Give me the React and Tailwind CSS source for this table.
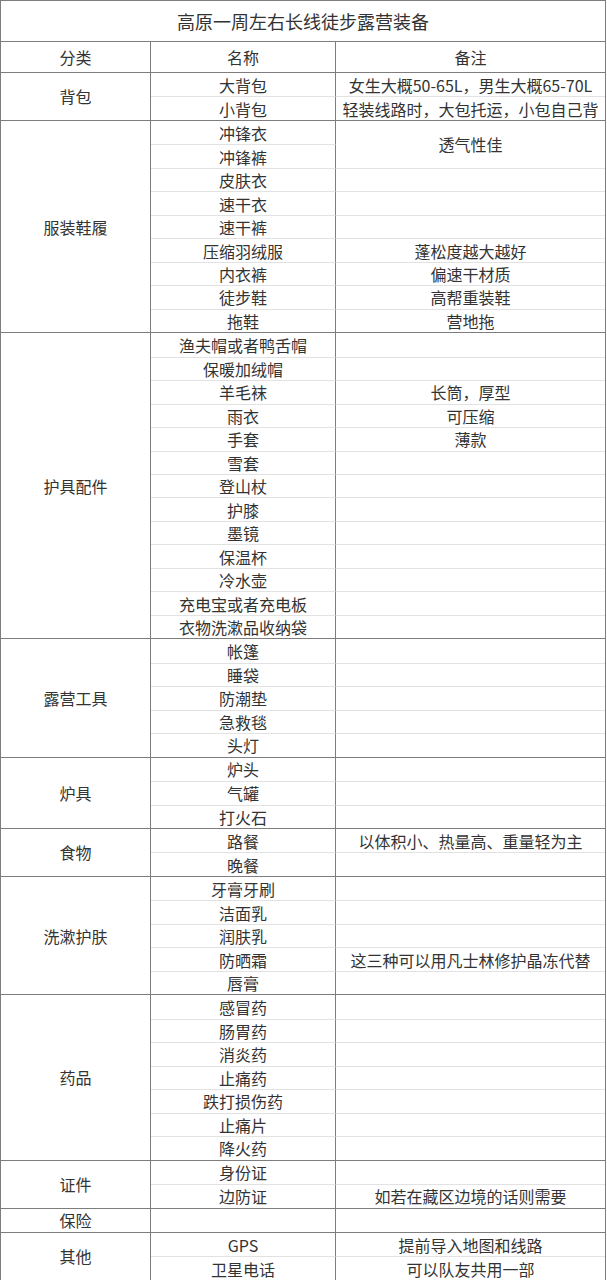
import React from "react";

// 高原徒步装备清单
const groups = [
  {
    name: "背包",
    items: [
      { name: "大背包", note: "女生大概50-65L，男生大概65-70L" },
      { name: "小背包", note: "轻装线路时，大包托运，小包自己背" },
    ],
  },
  {
    name: "服装鞋履",
    items: [
      { name: "冲锋衣", note: "透气性佳", span: 2 },
      { name: "冲锋裤", skip: true },
      { name: "皮肤衣" },
      { name: "速干衣" },
      { name: "速干裤" },
      { name: "压缩羽绒服", note: "蓬松度越大越好" },
      { name: "内衣裤", note: "偏速干材质" },
      { name: "徒步鞋", note: "高帮重装鞋" },
      { name: "拖鞋", note: "营地拖" },
    ],
  },
  {
    name: "护具配件",
    items: [
      { name: "渔夫帽或者鸭舌帽" },
      { name: "保暖加绒帽" },
      { name: "羊毛袜", note: "长筒，厚型" },
      { name: "雨衣", note: "可压缩" },
      { name: "手套", note: "薄款" },
      { name: "雪套" },
      { name: "登山杖" },
      { name: "护膝" },
      { name: "墨镜" },
      { name: "保温杯" },
      { name: "冷水壶" },
      { name: "充电宝或者充电板" },
      { name: "衣物洗漱品收纳袋" },
    ],
  },
  {
    name: "露营工具",
    items: [
      { name: "帐篷" },
      { name: "睡袋" },
      { name: "防潮垫" },
      { name: "急救毯" },
      { name: "头灯" },
    ],
  },
  {
    name: "炉具",
    items: [{ name: "炉头" }, { name: "气罐" }, { name: "打火石" }],
  },
  {
    name: "食物",
    items: [
      { name: "路餐", note: "以体积小、热量高、重量轻为主" },
      { name: "晚餐" },
    ],
  },
  {
    name: "洗漱护肤",
    items: [
      { name: "牙膏牙刷" },
      { name: "洁面乳" },
      { name: "润肤乳" },
      { name: "防晒霜", note: "这三种可以用凡士林修护晶冻代替" },
      { name: "唇膏" },
    ],
  },
  {
    name: "药品",
    items: [
      { name: "感冒药" },
      { name: "肠胃药" },
      { name: "消炎药" },
      { name: "止痛药" },
      { name: "跌打损伤药" },
      { name: "止痛片" },
      { name: "降火药" },
    ],
  },
  {
    name: "证件",
    items: [
      { name: "身份证" },
      { name: "边防证", note: "如若在藏区边境的话则需要" },
    ],
  },
  {
    name: "保险",
    items: [{ name: "" }],
  },
  {
    name: "其他",
    items: [
      { name: "GPS", note: "提前导入地图和线路" },
      { name: "卫星电话", note: "可以队友共用一部" },
    ],
  },
];

function Group({ group }) {
  const rows = group.items.length;
  return (
    <div className="grid grid-cols-[150px_185px_1fr] auto-rows-[23.47px] border-t border-[#7d7d7d]">
      <div
        className="flex items-center justify-center border-r border-[#7d7d7d]"
        style={{ gridRow: `span ${rows}` }}
      >
        {group.name}
      </div>
      {group.items.map((item, i) => (
        <React.Fragment key={i}>
          <div
            className={
              "flex items-center justify-center border-r border-[#7d7d7d] " +
              (i > 0 ? "border-t border-t-[#e2e2e2]" : "")
            }
            style={{ gridColumn: 2 }}
          >
            {item.name}
          </div>
          {!item.skip && (
            <div
              className={
                "flex items-center justify-center whitespace-nowrap " +
                (i > 0 ? "border-t border-[#e2e2e2]" : "")
              }
              style={{ gridColumn: 3, gridRow: item.span ? `span ${item.span}` : undefined }}
            >
              {item.note}
            </div>
          )}
        </React.Fragment>
      ))}
    </div>
  );
}

function App() {
  return (
    <div className="w-[607px] h-[1280px] overflow-hidden bg-white text-[#333] text-[16px] leading-none font-['Microsoft_YaHei','Noto_Sans_CJK_SC',sans-serif]">
      <div className="w-[606px] border-l border-r border-t border-[#7d7d7d]">
        <div className="h-[40px] flex items-center justify-center text-[18px]">
          高原一周左右长线徒步露营装备
        </div>
        <div className="h-[31px] grid grid-cols-[150px_185px_1fr] border-t border-[#7d7d7d]">
          <div className="flex items-center justify-center border-r border-[#7d7d7d]">分类</div>
          <div className="flex items-center justify-center border-r border-[#7d7d7d]">名称</div>
          <div className="flex items-center justify-center">备注</div>
        </div>
        {groups.map((g) => (
          <Group key={g.name} group={g} />
        ))}
      </div>
    </div>
  );
}

export default App;
